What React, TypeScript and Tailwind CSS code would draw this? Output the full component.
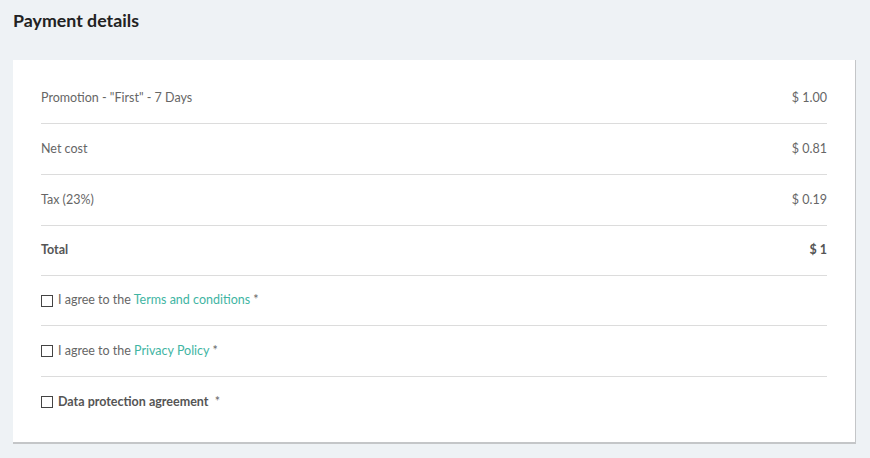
export default function App() {
  const rows = [
    { label: 'Promotion - "First" - 7 Days', value: '$ 1.00' },
    { label: 'Net cost', value: '$ 0.81' },
    { label: 'Tax (23%)', value: '$ 0.19' },
  ];

  return (
    <div className="min-h-screen w-[870px] h-[458px] bg-[#eef2f5] font-['Lato','Liberation_Sans',sans-serif] text-[12.5px] text-[#666]">
      <h1 className="px-[13px] pt-[9px] text-[17.8px] leading-[22px] font-bold text-[#222]">Payment details</h1>

      <div className="ml-[13px] mt-[29px] w-[843px] bg-white px-[28px] pt-[13px] pb-[15px] border-r border-b-2 border-[#c4c6c8]">
        {rows.map((row) => (
          <div key={row.label} className="h-[51px] flex items-center justify-between border-b border-[#dcdcdc]">
            <span>{row.label}</span>
            <span>{row.value}</span>
          </div>
        ))}
        <div className="h-[50px] flex items-center justify-between border-b border-[#dcdcdc] font-bold text-[#555]">
          <span>Total</span>
          <span>$ 1</span>
        </div>

        <label className="h-[50px] flex items-center gap-[5px] border-b border-[#dcdcdc]">
          <span className="w-[12px] h-[12px] border border-[#444] bg-white"></span>
          <span>
            I agree to the <a className="text-[#3fb5a3]">Terms and conditions</a> *
          </span>
        </label>
        <label className="h-[51px] flex items-center gap-[5px] border-b border-[#dcdcdc]">
          <span className="w-[12px] h-[12px] border border-[#444] bg-white"></span>
          <span>
            I agree to the <a className="text-[#3fb5a3]">Privacy Policy</a> *
          </span>
        </label>
        <label className="h-[50px] flex items-center gap-[5px]">
          <span className="w-[12px] h-[12px] border border-[#444] bg-white"></span>
          <span>
            <b className="font-bold text-[#555]">Data protection agreement</b> &nbsp;*
          </span>
        </label>
      </div>
    </div>
  );
}
